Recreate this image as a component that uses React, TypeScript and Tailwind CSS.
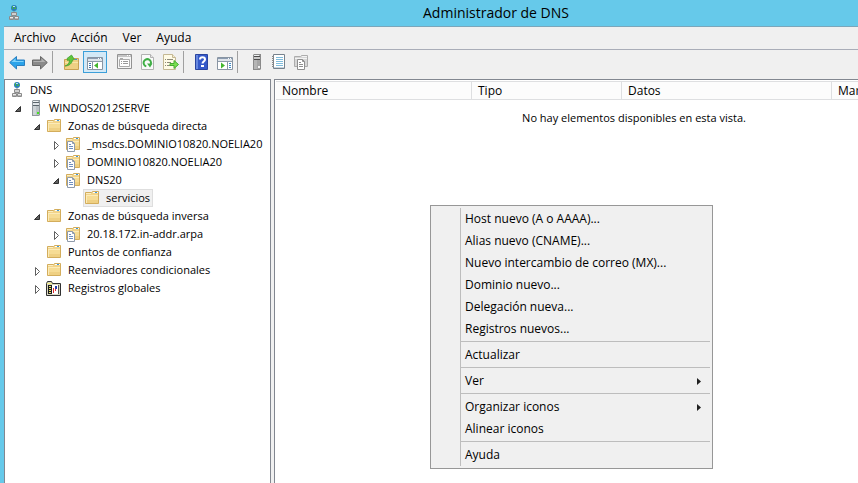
import type { ReactNode } from "react";

function Svg({ children }: { children: ReactNode }) {
  return (
    <svg width="16" height="16" viewBox="0 0 16 16" className="block shrink-0" aria-hidden>
      {children}
    </svg>
  );
}

function DnsIcon() {
  return (
    <Svg>
      <circle cx="6" cy="3" r="3" fill="#2a7fb8" />
      <path d="M4 1h2v1H5v2H4zM7 2h1v2H6V3h1z" fill="#45b04e" />
      <path d="M5 1h2v1H5z" fill="#b8e6f0" />
      <path d="M6 6v1" stroke="#8a8f94" fill="none" />
      <path d="M3.500 7.500h5v3h-5z" fill="#ececec" stroke="#8b8b8b" />
      <path d="M1.500 11.500h4v3h-4zM6.500 11.500h4v3h-4z" fill="#ececec" stroke="#8b8b8b" />
      <path d="M4 9h4M2 13.500h3M7 13.500h3" stroke="#b5b5b5" />
    </Svg>
  );
}

function ServerIcon({ dark = false }: { dark?: boolean }) {
  return (
    <Svg>
      <path d="M5 1l1-1h7v15l-1 1H5z" fill={dark ? "#8a8a8a" : "#8f979c"} />
      <path d="M6 1h6v14H6z" fill={dark ? "#a5a5a5" : "#b9c0c4"} />
      <path d="M6 1h5v1H6z" fill="#eef1f2" />
      <path d="M6 2h6v1H6zM6 5h6v1H6z" fill={dark ? "#4c4c4c" : "#5a646b"} />
      <path d="M6 3h6v2H6z" fill={dark ? "#c9c9c9" : "#dfe4e7"} />
      <path d="M6 6h3v9H6z" fill={dark ? "#b5b5b5" : "#cdd3d6"} />
      <path d="M10 12h2v2h-2z" fill={dark ? "#f2f2f2" : "#43e01f"} />
    </Svg>
  );
}

function FolderShape() {
  return (
    <>
      <path d="M1.500 2.500h6l1-1h6v12h-13z" fill="#f2d48a" stroke="#d3ad5c" />
      <path d="M2 3h5v1H2z" fill="#fbeec4" />
      <path d="M2 5h12v8H2z" fill="#f6dc95" />
      <path d="M2 5h12v1H2zM2 5h1v8H2z" fill="#fcebb8" />
      <path d="M3 10h11v3H3z" fill="#efd083" />
      <path d="M9 2h5v1H9z" fill="#fff" />
      <path d="M11 2h2v1h-2z" fill="#3f99dc" />
    </>
  );
}

function FolderIcon() {
  return <Svg><FolderShape /></Svg>;
}

function ZoneIcon() {
  return (
    <Svg>
      <FolderShape />
      <path d="M2.500 5.500h5l2 2v8h-7z" fill="#fff" stroke="#8f9bab" />
      <path d="M7.500 5.500v2h2" fill="none" stroke="#8f9bab" />
      <path d="M4 8.500h2M4 10.500h4M4 12.500h4" stroke="#6f8fc0" />
    </Svg>
  );
}

function LogsIcon() {
  return (
    <Svg>
      <path d="M.5 3.500l1-2h4l1 2h8v12H.5z" fill="#d8d6c0" stroke="#303030" />
      <path d="M1 3h5v1H1z" fill="#f4ef86" />
      <path d="M2 5h11v9H2z" fill="#1c1c1c" />
      <path d="M3 6h2v1H3zM3 8h2v1H3zM3 10h2v1H3zM3 12h2v1H3z" fill="#eee56b" />
      <path d="M6 5h6v9H6z" fill="#fff" />
      <path d="M9 6h2v3H9z" fill="#273aab" />
      <path d="M7 8h1v5H7zM9 9h1v2H9z" fill="#e22b2b" />
      <path d="M12 5h1v9h-1z" fill="#555" />
    </Svg>
  );
}

function ArrowIcon({ forward = false }: { forward?: boolean }) {
  return (
    <Svg>
      <g transform={forward ? "matrix(-1 0 0 1 16 0)" : undefined}>
        <path d="M.7 8.500L7.500 2.500V6h8v5.500h-8v3.500z" fill={forward ? "#8a8a8a" : "#2ba3ea"} stroke={forward ? "#686868" : "#2a7fc0"} />
        <path d="M2.500 8L6.500 4.400V7h8v1z" fill={forward ? "#b2b2b2" : "#7fd3fb"} />
      </g>
    </Svg>
  );
}

function UpFolderIcon() {
  return (
    <Svg>
      <path d="M1.500 5.500h5l1-1h8v11h-14z" fill="#efd083" stroke="#c9a253" />
      <path d="M2 8h13v1H2z" fill="#f9e5a7" />
      <path d="M12 5h2v1h-2z" fill="#438fd3" />
      <path d="M2 12c3-1 4.500-3 4.500-6L4.500 6.500 4 4.500 8.500 1l3 4.500-2 .5C9 9.500 6 12 2 12z" fill="#5fc63c" stroke="#3b9a2b" strokeWidth=".7" />
    </Svg>
  );
}

function PaneIcon({ forward = false }: { forward?: boolean }) {
  return (
    <Svg>
      <path d="M.5 3.500h15v12H.5z" fill="#fff" stroke="#8995a3" />
      <path d="M1 4h14v1H1z" fill="#8b9bb0" />
      <path d="M11 4h1v1h-1zM13 4h1v1h-1z" fill="#fff" />
      <path d="M1 5h14v2H1z" fill="#dfe4ea" />
      <path d="M1 7.500h14" stroke="#8f9cab" />
      {forward ? (
        <>
          <path d="M10.500 8v7" stroke="#8995a3" />
          <path d="M12 9.500h2M12 11.500h2M12 13.500h2" stroke="#3c89c8" />
          <path d="M4 8.500l4 3-4 3z" fill="#43b62d" />
        </>
      ) : (
        <>
          <path d="M5.500 8v7" stroke="#8995a3" />
          <path d="M2 9.500h2M2 11.500h2M2 13.500h2" stroke="#3c74ad" />
          <path d="M11 8.500l-4 3 4 3z" fill="#43b62d" />
        </>
      )}
    </Svg>
  );
}

function PropertiesIcon() {
  return (
    <Svg>
      <path d="M.5.500h14v14h-14z" fill="#f5f5f5" stroke="#929292" />
      <path d="M1 1h13v2H1z" fill="#c4c4c4" />
      <path d="M10 1h1v1h-1zM12 1h1v1h-1z" fill="#fff" />
      <path d="M2.500 5.500h10v7h-10zM3 4.500h3" fill="#fff" stroke="#aaa" />
      <path d="M4 7.500h1M6 7.500h5M4 9.500h1M6 9.500h5" stroke="#999" />
    </Svg>
  );
}

function RefreshIcon() {
  return (
    <Svg>
      <path d="M1.500.5h9l3 3v12h-12z" fill="#fafafa" stroke="#b2b2b2" />
      <path d="M10.500.5v3h3" fill="#e7e7e7" stroke="#b2b2b2" />
      <path d="M6.300 12.400A3.700 3.700 0 1 1 10.800 10" fill="none" stroke="#3fae45" strokeWidth="2" />
      <path d="M7 9.500h5.500l-2.500 4z" fill="#3fae45" />
    </Svg>
  );
}

function ExportIcon() {
  return (
    <Svg>
      <path d="M.5.5h9l3 3v12H.5z" fill="#fffbe6" stroke="#c4b893" />
      <path d="M9.500.5v3h3" fill="#f3ecd0" stroke="#c4b893" />
      <path d="M2 5.500h1M4 5.500h6M2 8.500h1M4 8.500h4M2 11.500h1M4 11.500h4" stroke="#8d8a79" />
      <path d="M7 9.500h4v-3l4.500 4-4.500 4v-3H7z" fill="#7ade4f" stroke="#45ad30" />
    </Svg>
  );
}

function HelpIcon() {
  return (
    <Svg>
      <path d="M1.500.5h12v15h-12z" fill="#3559c9" stroke="#2a459f" />
      <path d="M2 1h2v14H2z" fill="#6788df" />
      <path d="M6 5.500c0-3 5-3 5 0 0 2-2.500 2-2.500 4" fill="none" stroke="#fff" strokeWidth="2" />
      <path d="M7 11h3v2H7z" fill="#fff" />
    </Svg>
  );
}

function NotebookIcon() {
  return (
    <Svg>
      <path d="M2.500.5h11v14h-11z" fill="#fff" stroke="#76828d" />
      <path d="M5 3.500h7M5 5.500h7M5 7.500h7M5 9.500h7M5 11.500h7" stroke="#7fbcdc" />
      <path d="M3 13h10v1H3z" fill="#c4d3df" />
      <path d="M1 2.500h2M1 4.500h2M1 6.500h2M1 8.500h2M1 10.500h2M1 12.500h2" stroke="#8a8a8a" />
    </Svg>
  );
}

function CopyZoneIcon() {
  return (
    <Svg>
      <path d="M.5 2.500h6l1-1h6v11H.5z" fill="#d6d6d6" stroke="#acacac" />
      <path d="M1 4h12v1H1zM8 2h5v1H8z" fill="#f3f3f3" />
      <path d="M3.500 5.500h5l2 2v8h-7z" fill="#fff" stroke="#8f8f8f" />
      <path d="M8.500 5.500v2h2M5 8.500h2M5 10.500h4M5 12.500h4" fill="none" stroke="#8f8f8f" />
    </Svg>
  );
}

function Tool({ label, pressed, className = "", children }: { label: string; pressed?: boolean; className?: string; children: ReactNode }) {
  return (
    <button
      type="button"
      aria-label={label}
      aria-pressed={pressed}
      className={`flex h-[22px] shrink-0 items-center justify-center ${pressed ? "w-6 border border-[#3c9fd9] bg-[#d3e9f7]" : "w-4"} ${className}`}
    >
      {children}
    </button>
  );
}

function ToolDivider({ className = "" }: { className?: string }) {
  return <div role="separator" className={`h-[22px] w-px shrink-0 bg-[#a0a0a0] ${className}`} />;
}

function Expander({ open, label }: { open: boolean; label: string }) {
  return (
    <button type="button" aria-label={`${open ? "Contraer" : "Expandir"} ${label}`} className="flex h-full w-full items-center justify-center">
      <svg width="8" height="10" viewBox="0 0 8 10" className="mt-0.5 block" aria-hidden>
        {open ? (
          <path d="M6.500 2.500v5h-5z" fill="#606060" stroke="#303030" />
        ) : (
          <path d="M2.500 1.500l4 4-4 4z" fill="#fff" stroke="#606060" />
        )}
      </svg>
    </button>
  );
}

type Node = { label: string; icon: ReactNode; open?: boolean; selected?: boolean; children?: Node[] };

const tree: Node[] = [
  {
    label: "WINDOS2012SERVE",
    icon: <ServerIcon />,
    open: true,
    children: [
      {
        label: "Zonas de búsqueda directa",
        icon: <FolderIcon />,
        open: true,
        children: [
          { label: "_msdcs.DOMINIO10820.NOELIA20", icon: <ZoneIcon />, open: false },
          { label: "DOMINIO10820.NOELIA20", icon: <ZoneIcon />, open: false },
          {
            label: "DNS20",
            icon: <ZoneIcon />,
            open: true,
            children: [{ label: "servicios", icon: <FolderIcon />, selected: true }],
          },
        ],
      },
      {
        label: "Zonas de búsqueda inversa",
        icon: <FolderIcon />,
        open: true,
        children: [{ label: "20.18.172.in-addr.arpa", icon: <ZoneIcon />, open: false }],
      },
      { label: "Puntos de confianza", icon: <FolderIcon /> },
      { label: "Reenviadores condicionales", icon: <FolderIcon />, open: false },
      { label: "Registros globales", icon: <LogsIcon />, open: false },
    ],
  },
];

function TreeItem({ node }: { node: Node }) {
  return (
    <li role="treeitem" aria-expanded={node.open} aria-selected={node.selected ?? false}>
      <div className="flex h-[18px] items-center">
        <div className="h-full w-[17px] shrink-0">
          {node.open !== undefined && <Expander open={node.open} label={node.label} />}
        </div>
        <div className={`flex h-[18px] items-center gap-1.5 whitespace-nowrap border pr-0.5 ${node.selected ? "border-[#dedede] bg-[#f0f0f0]" : "border-transparent"}`}>
          {node.icon}
          <span>{node.label}</span>
        </div>
      </div>
      {node.children && (
        <ul role="group" className="pl-[19px]">
          {node.children.map((child) => <TreeItem key={child.label} node={child} />)}
        </ul>
      )}
    </li>
  );
}

const menuGroups: { label: string; submenu?: boolean }[][] = [
  [
    { label: "Host nuevo (A o AAAA)..." },
    { label: "Alias nuevo (CNAME)..." },
    { label: "Nuevo intercambio de correo (MX)..." },
    { label: "Dominio nuevo..." },
    { label: "Delegación nueva..." },
    { label: "Registros nuevos..." },
  ],
  [{ label: "Actualizar" }],
  [{ label: "Ver", submenu: true }],
  [{ label: "Organizar iconos", submenu: true }, { label: "Alinear iconos" }],
  [{ label: "Ayuda" }],
];

function ContextMenu() {
  return (
    <div role="menu" className="absolute left-[430px] top-[205px] w-[283px] border border-[#979797] bg-[#f0f0f0] py-0.5 pl-[29px] pr-0.5">
      <div className="border-l border-[#bdbdbd]">
        {menuGroups.map((group, index) => (
          <div key={group[0].label}>
            {index > 0 && <div role="separator" className="mb-0.5 mt-px h-px bg-[#bdbdbd]" />}
            {group.map((item) => (
              <button key={item.label} type="button" role="menuitem" className="flex h-[22px] w-full items-center justify-between pl-1 pr-2 text-left">
                <span>{item.label}</span>
                {item.submenu && (
                  <svg width="5" height="7" viewBox="0 0 5 7" aria-hidden><path d="M0 0l4 3.500L0 7z" fill="#202020" /></svg>
                )}
              </button>
            ))}
          </div>
        ))}
      </div>
    </div>
  );
}

export default function App() {
  return (
    <div className="relative h-screen overflow-hidden bg-[#66c9ea] font-['Open_Sans','Noto_Sans',sans-serif] text-[12px] leading-4 text-black">
      <div className="flex h-full min-w-[992px] flex-col">
        <header className="flex h-[26px] shrink-0 items-center pl-2 pr-6">
          <DnsIcon />
          <h1 className="flex-1 text-center text-[14px] leading-5">Administrador de DNS</h1>
        </header>
        <div className="ml-1 flex min-h-0 flex-1 flex-col border-t border-[#7ba6ba] bg-[#f0f0f0]">
          <nav aria-label="Menú principal" className="flex h-[23px] shrink-0 items-center gap-[15px] border-b border-[#a9adb8] pl-2.5">
            <button type="button">Archivo</button>
            <button type="button">Acción</button>
            <button type="button">Ver</button>
            <button type="button">Ayuda</button>
          </nav>
          <div role="toolbar" aria-label="Herramientas" className="flex h-[29px] shrink-0 items-start pl-[5px] pt-px">
            <Tool label="Atrás"><ArrowIcon /></Tool>
            <Tool label="Adelante" className="ml-[7px]"><ArrowIcon forward /></Tool>
            <ToolDivider className="ml-1" />
            <Tool label="Subir un nivel" className="ml-2.5"><UpFolderIcon /></Tool>
            <Tool label="Mostrar u ocultar árbol" pressed className="ml-1"><PaneIcon /></Tool>
            <Tool label="Propiedades" className="ml-2.5"><PropertiesIcon /></Tool>
            <Tool label="Actualizar" className="ml-[7px]"><RefreshIcon /></Tool>
            <Tool label="Exportar lista" className="ml-[7px]"><ExportIcon /></Tool>
            <ToolDivider className="ml-1" />
            <Tool label="Ayuda" className="ml-2.5"><HelpIcon /></Tool>
            <Tool label="Panel de acciones" className="ml-[7px]"><PaneIcon forward /></Tool>
            <ToolDivider className="ml-1" />
            <Tool label="Servidor nuevo" className="ml-2.5"><ServerIcon dark /></Tool>
            <Tool label="Registro nuevo" className="ml-[7px]"><NotebookIcon /></Tool>
            <Tool label="Zona nueva" className="ml-[7px]"><CopyZoneIcon /></Tool>
          </div>
          <div className="flex min-h-0 flex-1 gap-[3px]">
            <aside className="w-[267px] shrink-0 overflow-hidden border-x border-t border-[#828790] bg-white pt-px text-[11px]">
              <ul role="tree" aria-label="Consola">
                <li role="treeitem" aria-expanded aria-selected={false}>
                  <div className="flex h-[18px] items-center gap-[3px] pl-1.5">
                    <DnsIcon />
                    <span>DNS</span>
                  </div>
                  <ul role="group" className="pl-1">
                    {tree.map((node) => <TreeItem key={node.label} node={node} />)}
                  </ul>
                </li>
              </ul>
            </aside>
            <main className="min-w-0 flex-1 border-l border-t border-[#828790] bg-white pl-px pt-px">
              <table className="w-full table-fixed border-separate border-spacing-0 text-left">
                <colgroup>
                  <col className="w-[196px]" />
                  <col className="w-[150px]" />
                  <col className="w-[210px]" />
                  <col />
                </colgroup>
                <thead>
                  <tr>
                    {["Nombre", "Tipo", "Datos", "Marca de tiempo"].map((name) => (
                      <th key={name} scope="col" className="h-[19px] whitespace-nowrap border-y border-r border-[#dedfe1] bg-[#fcfcfc] p-0 pl-1.5 font-normal">{name}</th>
                    ))}
                  </tr>
                </thead>
                <tbody>
                  <tr>
                    <td colSpan={4} className="p-0 pt-2.5 text-center text-[11px]">No hay elementos disponibles en esta vista.</td>
                  </tr>
                </tbody>
              </table>
            </main>
          </div>
        </div>
      </div>
      <ContextMenu />
    </div>
  );
}
